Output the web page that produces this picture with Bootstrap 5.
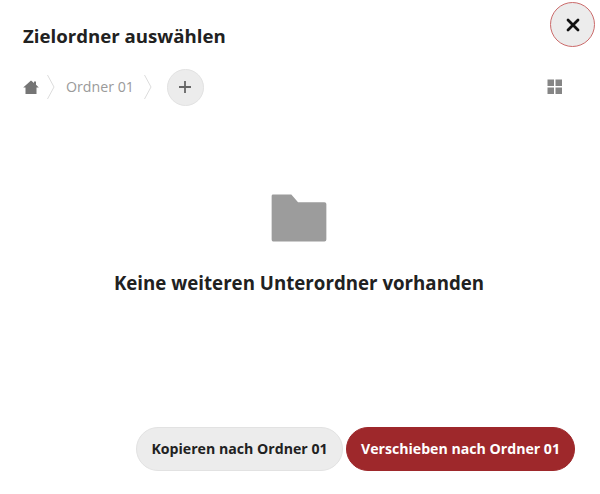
<!DOCTYPE html>
<html lang="de">
<head>
<meta charset="UTF-8">
<meta name="viewport" content="width=device-width, initial-scale=1.0">
<title>Zielordner auswählen</title>
<link href="https://cdn.jsdelivr.net/npm/bootstrap@5.3.0/dist/css/bootstrap.min.css" rel="stylesheet">
<style>
    html, body { height: 100%; overflow: hidden; }
    body { font-family: "Open Sans", "Noto Sans", sans-serif; color: #212121; background: #fff; }
    .dlg { height: 494px; padding: 23px 25px 23px 23px; }
    .dlg-title { font-size: 18.65px; font-weight: 700; line-height: 26px; margin: 0; color: #212121; }
    .btn-close-round {
        position: absolute; top: 2px; right: 5px; width: 45px; height: 45px; padding: 0;
        border-radius: 50%; background: #ececec; border: 1.5px solid #cb6a6a;
    }
    .crumbs { height: 38px; margin-top: 19px; margin-right: 12px; }
    .crumb-text { font-size: 14.2px; color: #9a9a9a; margin: 0 10px 0 11px; }
    .btn-add { width: 37px; height: 37px; padding: 0; border-radius: 50%; background: #ececec; border: 1px solid #e2e2e2; margin-left: 15px; }
    .empty-box { margin-top: 88px; }
    .empty-text { font-size: 18.7px; font-weight: 700; margin: 28px 0 0 0; line-height: 26px; }
    .btn-pill { height: 44px; border-radius: 22px; font-size: 14.15px; font-weight: 700; padding: 0 10px; white-space: nowrap; }
    .btn-grey { background: #ececec; border: 1px solid #e2e2e2; color: #212121; width: 207px; }
    .btn-red { background: #9e282b; border: 1px solid #9e282b; color: #fff; width: 229px; }
    .btn-row { gap: 3px; }
</style>
</head>
<body>
    <div class="dlg position-relative d-flex flex-column">
        <button type="button" class="btn-close-round d-flex align-items-center justify-content-center" aria-label="Schließen">
            <svg width="14" height="14" viewBox="0 0 14 14"><path d="M2 2 L12 12 M12 2 L2 12" stroke="#111" stroke-width="2.8" stroke-linecap="round"/></svg>
        </button>

        <h1 class="dlg-title">Zielordner auswählen</h1>

        <div class="crumbs d-flex align-items-center">
            <svg width="16" height="15" viewBox="0 0 16 15"><path d="M8 0.5 L11 3 V1.5 H13 V4.8 L15.8 7.5 H13.5 V14 H2.5 V7.5 H0.2 Z" fill="#757575"/></svg>
            <svg class="ms-2" width="8" height="26" viewBox="0 0 8 26"><path d="M0.5 1 L7 13 L0.5 25" fill="none" stroke="#dcdcdc"/></svg>
            <span class="crumb-text">Ordner 01</span>
            <svg width="8" height="26" viewBox="0 0 8 26"><path d="M0.5 1 L7 13 L0.5 25" fill="none" stroke="#dcdcdc"/></svg>
            <button type="button" class="btn-add d-flex align-items-center justify-content-center" aria-label="Neuer Ordner">
                <svg width="14" height="14" viewBox="0 0 14 14"><path d="M7 1 V13 M1 7 H13" stroke="#666" stroke-width="1.8"/></svg>
            </button>
            <svg class="ms-auto" width="16" height="16" viewBox="0 0 16 16" fill="#858585">
                <rect x="0.5" y="0.5" width="6.5" height="6.5"/><rect x="8.5" y="0.5" width="6.5" height="6.5"/>
                <rect x="0.5" y="8.5" width="6.5" height="6.5"/><rect x="8.5" y="8.5" width="6.5" height="6.5"/>
            </svg>
        </div>

        <div class="empty-box text-center">
            <svg width="56" height="48" viewBox="0 0 58 50"><path d="M2 0.5 H21 L28 8.5 H55.5 Q57.5 8.5 57.5 10.5 V47.5 Q57.5 49.5 55.5 49.5 H2 Q0.5 49.5 0.5 47.5 V2 Q0.5 0.5 2 0.5 Z" fill="#9c9c9c"/></svg>
            <p class="empty-text">Keine weiteren Unterordner vorhanden</p>
        </div>

        <div class="mt-auto d-flex justify-content-end btn-row">
            <button type="button" class="btn btn-pill btn-grey">Kopieren nach Ordner 01</button>
            <button type="button" class="btn btn-pill btn-red">Verschieben nach Ordner 01</button>
        </div>
    </div>
    <script src="https://cdn.jsdelivr.net/npm/bootstrap@5.3.0/dist/js/bootstrap.bundle.min.js"></script>
</body>
</html>
